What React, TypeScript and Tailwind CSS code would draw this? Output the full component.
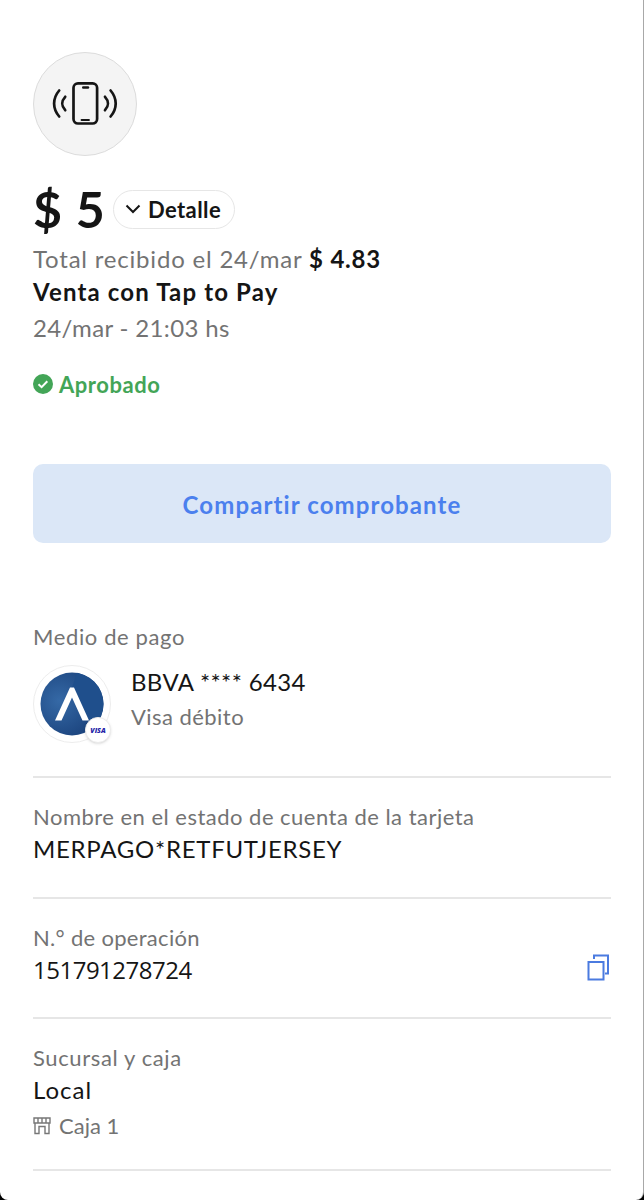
import type { ReactNode } from "react";

function TapToPayIcon() {
    return (
        <svg width="66" height="46" viewBox="0 0 66 46" fill="none" stroke="#151515" strokeLinecap="round">
            <rect x="21.500" y="2.300" width="23.600" height="40.200" rx="4.500" strokeWidth="2.700" />
            <path d="M31.200 6.500h4.800" strokeWidth="2.400" />
            <path d="M29.500 39h7.500" strokeWidth="1.800" />
            <path d="M7.200 9.500C0.400 17.500 0.400 27.500 7.200 35.500M13.200 15.800C9.300 20 9.300 25 13.200 29.200" strokeWidth="2.700" />
            <path d="M58.600 9.500C65.400 17.500 65.400 27.500 58.600 35.500M53 15.800C56.900 20 56.900 25 53 29.200" strokeWidth="2.700" />
        </svg>
    );
}

function BankLogo() {
    return (
        <div className="relative mt-px size-[78px] shrink-0 rounded-full border-[1.5px] border-[#ededed] bg-white">
            <svg className="absolute left-[6px] top-[6px]" width="64" height="64" viewBox="0 0 64 64">
                <defs>
                    <radialGradient id="bank" cx="0.3" cy="0.45" r="0.6">
                        <stop offset="0" stopColor="#3569a6" />
                        <stop offset="1" stopColor="#1d4680" />
                    </radialGradient>
                    <clipPath id="disc">
                        <circle cx="32" cy="32" r="31.5" />
                    </clipPath>
                </defs>
                <g clipPath="url(#disc)">
                    <rect width="64" height="64" fill="url(#bank)" />
                    <path d="M37 0L32 16L49 49L64 64V0Z" fill="#1f4f8c" />
                </g>
                <path d="M30 15.500h4L49 48.500h-6.500L32 25.500L21.500 48.500H15Z" fill="#fff" />
            </svg>
            <div className="absolute left-[51px] top-[51px] flex size-[26px] items-center justify-center rounded-full border border-[#ececec] bg-white font-['Open_Sans',sans-serif] text-[7px] font-extrabold italic leading-none text-[#2422a8] shadow-sm">
                VISA
            </div>
        </div>
    );
}

function Section({ label, tracking, children }: { label: string; tracking: string; children: ReactNode }) {
    return (
        <section className="border-b-2 border-[#e6e6e6]">
            <h2 className={`text-[22px] leading-7 text-[#737373] ${tracking}`}>{label}</h2>
            {children}
        </section>
    );
}

export default function App() {
    return (
        <div className="relative h-[1200px] w-[644px] overflow-hidden bg-black font-['Lato',sans-serif] text-[#151515]">
            <main className="h-full rounded-b-[8px] border-r border-[#a8a8a8] bg-white pl-[33px] pr-8 pt-[52px]">
                <div className="flex size-[104px] items-center justify-center rounded-full border-[1.5px] border-[#dcdcdc] bg-[#f4f4f4]">
                    <TapToPayIcon />
                </div>

                <div className="mt-[34px] flex h-[38px] items-center">
                    <h1 className="w-20 whitespace-nowrap text-[50px] font-bold leading-[39px] tracking-[0.8px]">$ 5</h1>
                    <button className="flex h-[39px] w-[122px] items-center rounded-full border-[1.5px] border-[#e6e6e6] pl-[11px]">
                        <svg width="16" height="10" viewBox="0 0 16 10" fill="none" stroke="#151515" strokeWidth="2">
                            <path d="M1.500 1.500L8 8L14.500 1.500" />
                        </svg>
                        <span className="ml-[7px] pt-[2px] text-[22px] font-bold leading-7 tracking-[0.4px]">Detalle</span>
                    </button>
                </div>

                <div className="mt-[14px] whitespace-nowrap text-2xl leading-[33px]">
                    <p className="tracking-[0.8px] text-[#737373]">
                        Total recibido el 24/mar <b className="text-[#151515]">$ 4.83</b>
                    </p>
                    <p className="font-bold tracking-[1.15px]">Venta con Tap to Pay</p>
                    <p className="leading-[39px] tracking-[0.35px] text-[#737373]">24/mar - 21:03 hs</p>
                </div>

                <div className="mt-[23px] flex h-7 items-center gap-[6px] text-[22px] font-bold tracking-[0.55px] text-[#43a557]">
                    <svg width="20" height="20" viewBox="0 0 20 20" fill="none">
                        <circle cx="10" cy="10" r="10" fill="#43a557" />
                        <path d="M5.500 10.300L8.600 13.200L14.300 7.300" stroke="#fff" strokeWidth="2" />
                    </svg>
                    Aprobado
                </div>

                <button className="mt-[66px] flex h-[79px] w-full items-center justify-center rounded-[10px] bg-[#dbe7f7] pt-[2px] text-2xl font-bold tracking-[1.1px] text-[#4b80ee]">
                    Compartir comprobante
                </button>

                <div className="mt-20 flex flex-col gap-[25px]">
                    <Section label="Medio de pago" tracking="tracking-[0.62px]">
                        <div className="mt-[13px] flex gap-5 pb-[33px]">
                            <BankLogo />
                            <div>
                                <p className="text-2xl leading-9 tracking-[0.35px]">BBVA **** 6434</p>
                                <p className="mt-[3px] text-[22px] leading-7 tracking-[0.45px] text-[#737373]">Visa débito</p>
                            </div>
                        </div>
                    </Section>
                    <Section label="Nombre en el estado de cuenta de la tarjeta" tracking="tracking-[0.48px]">
                        <p className="pb-[30px] text-2xl leading-9 tracking-[0.72px]">MERPAGO*RETFUTJERSEY</p>
                    </Section>
                    <Section label="N.° de operación" tracking="tracking-[0.3px]">
                        <div className="flex justify-between pb-[29px]">
                            <p className="font-['Open_Sans',sans-serif] text-2xl leading-9 tracking-[-0.5px]">151791278724</p>
                            <svg className="mt-px" width="24" height="28" viewBox="0 0 24 28" fill="none" stroke="#4b7be0" strokeWidth="2">
                                <rect x="1.500" y="9" width="15" height="17.500" />
                                <path d="M7 6V2.500h14v18h-3" />
                            </svg>
                        </div>
                    </Section>
                    <Section label="Sucursal y caja" tracking="tracking-[0.62px]">
                        <p className="text-2xl leading-9 tracking-[1px]">Local</p>
                        <div className="mt-1 flex items-center gap-2 pb-[29px] text-[22px] leading-7 text-[#737373]">
                            <svg width="18" height="18" viewBox="0 0 18 18" fill="none" stroke="#777" strokeWidth="1.400">
                                <path d="M1 1h16v5H1ZM5 1v5M9 1v5M13 1v5M2 6v10.500h4V9.500h6v7h4V6" />
                            </svg>
                            Caja 1
                        </div>
                    </Section>
                </div>
            </main>
        </div>
    );
}
